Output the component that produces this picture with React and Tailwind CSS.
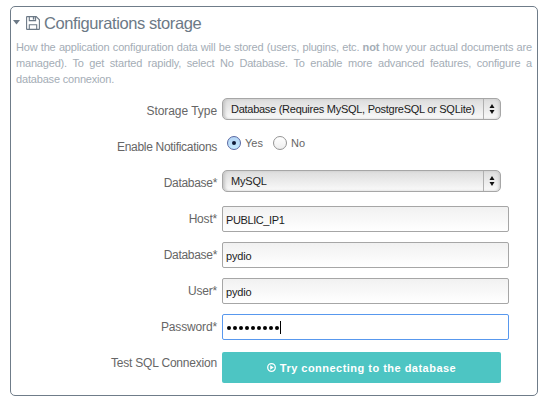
function Row({ label, labelClass, className = "", children }) {
  return (
    <div className={`flex h-9 items-start ${className}`}>
      <div className={`w-[206px] shrink-0 pt-[5px] text-right text-[12px] leading-[16px] text-[#666] ${labelClass}`}>
        {label}
      </div>
      <div className="ml-[5px]">{children}</div>
    </div>
  );
}

function Select({ value, textClass }) {
  return (
    <div className="flex h-[22px] w-[279px] overflow-hidden rounded-[5px] border border-[#a6a6a6] bg-linear-to-b from-[#dcdcdc] to-[#fafafa] shadow-[inset_3px_0_3px_-1px_#c6c6c6,inset_-2px_0_3px_-1px_#c6c6c6]">
      <div className={`flex-1 whitespace-nowrap pl-2 text-[11px] leading-[20px] text-[#1c1c1c] ${textClass}`}>{value}</div>
      <div className="flex w-[17px] items-center justify-center border-l border-[#b0b0b0]">
        <svg width="6" height="10" viewBox="0 0 6 10" fill="#111">
          <path d="M3 0 5.5 4h-5zM3 10 .5 6h5z" />
        </svg>
      </div>
    </div>
  );
}

function Field({ value, textClass = "" }) {
  return (
    <div className="h-[26px] w-[287px] rounded-[2px] border border-[#a6a6a6] bg-linear-to-b from-[#f1f1f1] to-white">
      <div className={`pl-[3px] pt-[3px] text-[11px] leading-[20px] text-[#1c1c1c] ${textClass}`}>{value}</div>
    </div>
  );
}

export default function App() {
  return (
    <div className="h-[406px] w-[547px] overflow-hidden bg-white pl-[10px] pt-[6px] font-['Liberation_Sans',Arial,sans-serif]">
      <div className="h-[390px] w-[528px] rounded-[5px] border border-[#6f7c89]">
        <div className="flex h-[32px] items-start text-[#6c7986]">
          <svg className="ml-[2px] mt-[13px]" width="7" height="5" viewBox="0 0 7 5" fill="currentColor">
            <path d="M0 0h7L3.5 4.5z" />
          </svg>
          <svg className="ml-[6px] mt-[9px]" width="14" height="14" viewBox="0 0 14 14" fill="none" stroke="currentColor" strokeWidth="1.1">
            <path d="M.6 1.1Q.6.6 1.1.6H10.2L13.4 3.8V12.9Q13.4 13.4 12.9 13.4H1.1Q.6 13.4.6 12.9z" />
            <path d="M3.3.6V4.6H9.6V.6M3.3 13.4V8.7H10.7V13.4" />
            <path d="M7.6 1V3.6" strokeWidth="1.5" />
          </svg>
          <h1 className="ml-1 mt-[5px] whitespace-nowrap text-[16.5px] leading-[22px] tracking-[-0.4px]">Configurations storage</h1>
        </div>
        <div className="ml-[5px] w-[516px] whitespace-nowrap text-[11px] leading-[16px] tracking-[-0.18px] text-[#a4adb6]">
          <div className="[text-align-last:justify]">
            How the application configuration data will be stored (users, plugins, etc. <b>not</b> how your actual documents are
          </div>
          <div className="[text-align-last:justify]">
            managed). To get started rapidly, select No Database. To enable more advanced features, configure a
          </div>
          <div>database connexion.</div>
        </div>
        <div className="pt-[11px]">
          <Row label="Storage Type" labelClass="tracking-[-0.05px]">
            <Select value="Database (Requires MySQL, PostgreSQL or SQLite)" textClass="tracking-[-0.27px]" />
          </Row>
          <Row label="Enable Notifications" labelClass="tracking-[-0.3px]">
            <div className="flex items-start pl-[5px] pt-[2px] text-[11px] leading-[15px] text-[#666]">
              <span className="flex size-[14px] items-center justify-center rounded-full border border-[#5968a3] bg-linear-to-b from-[#b5d5f5] to-[#c4eaff]">
                <span className="size-1 rounded-full bg-[#101c38]" />
              </span>
              <span className="ml-1 w-[28px]">Yes</span>
              <span className="size-[14px] rounded-full border border-[#949494] bg-linear-to-b from-white to-[#eee]" />
              <span className="ml-1">No</span>
            </div>
          </Row>
          <Row label="Database*" labelClass="tracking-[-0.3px]">
            <Select value="MySQL" textClass="tracking-[-0.2px]" />
          </Row>
          <Row label="Host*" labelClass="tracking-[-0.2px]">
            <Field value="PUBLIC_IP1" textClass="tracking-[-0.4px]" />
          </Row>
          <Row label="Database*" labelClass="tracking-[-0.3px]">
            <Field value="pydio" textClass="tracking-[-0.2px]" />
          </Row>
          <Row label="User*" labelClass="tracking-[-0.2px]">
            <Field value="pydio" textClass="tracking-[-0.2px]" />
          </Row>
          <Row label="Password*" labelClass="tracking-[-0.15px]">
            <div className="flex h-[26px] w-[287px] items-center rounded-[2px] border border-[#5898ee] bg-white pl-1">
              <div className="flex gap-[2px] pt-[2px]">
                {Array.from({ length: 9 }, (_, i) => (
                  <span key={i} className="size-1 rounded-full bg-black" />
                ))}
              </div>
              <span className="ml-px h-[13px] w-px bg-black" />
            </div>
          </Row>
          <Row label="Test SQL Connexion" labelClass="tracking-[-0.2px]">
            <div className="mt-[2px] flex h-[31px] w-[279px] items-center justify-center rounded-[2px] bg-[#4dc5c3] text-[11px] font-bold tracking-[0.48px] text-white">
              <svg className="mr-1" width="9" height="9" viewBox="0 0 9 9">
                <circle cx="4.5" cy="4.5" r="3.8" fill="none" stroke="white" strokeWidth="1.3" />
                <path d="M3.2 2.3 6.8 4.5 3.2 6.7z" fill="white" />
              </svg>
              <span className="pt-px">Try connecting to the database</span>
            </div>
          </Row>
        </div>
      </div>
    </div>
  );
}
